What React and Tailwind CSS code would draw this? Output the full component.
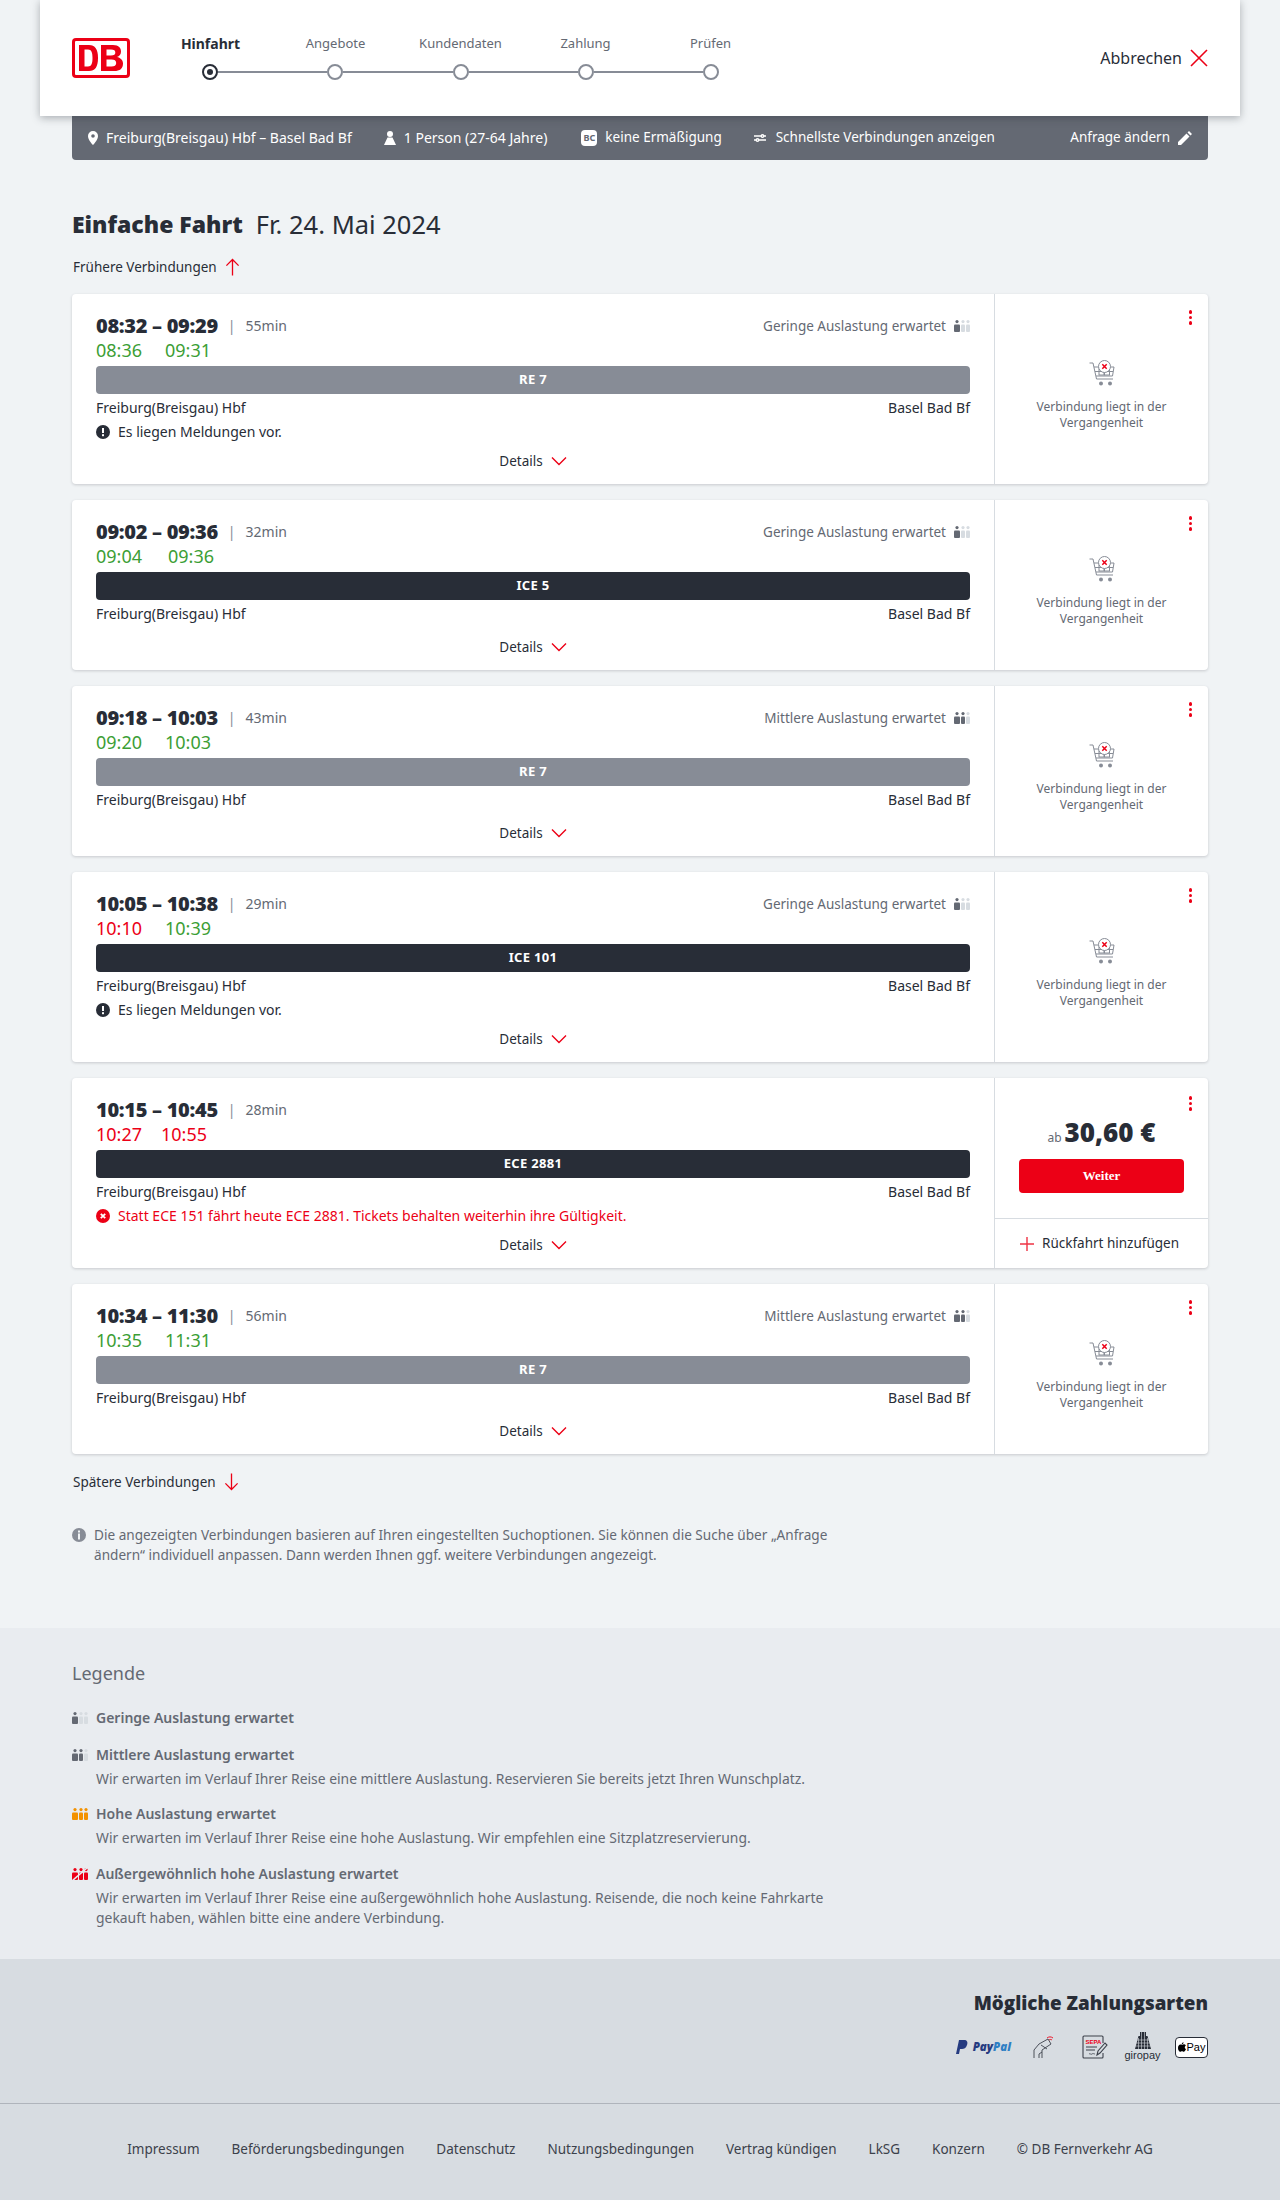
import React from 'react';

const Occupancy = ({ level, className = '' }) => {
  const color = (i) => {
    if (level === 3) return '#f39200';
    if (level === 4) return '#ec0016';
    return i < level ? '#646973' : '#d7dce1';
  };
  return (
    <svg viewBox="0 0 16 12" className={`w-4 h-3 shrink-0 ${className}`}>
      {[0, 1, 2].map((i) => {
        const x = i === 0 ? 0 : i === 1 ? 7 : 12;
        const w = i === 0 ? 6 : 4;
        return (
          <g key={i} fill={color(i)}>
            <circle cx={x + w / 2} cy="1.6" r="1.6" />
            <rect x={x} y="4.6" width={w} height="7.4" rx="1" />
          </g>
        );
      })}
      {level === 4 && <path d="M1 12 15 0" stroke="#e9ecf0" strokeWidth="1.6" />}
    </svg>
  );
};

const CartIcon = () => (
  <svg viewBox="0 0 26 26" className="w-[26px] h-[26px]" fill="none" stroke="#878c96" strokeWidth="1">
    <path d="M0.5 3 H4 L7.5 19 H24" />
    <path d="M5 7 H25 L23.5 16 H7" />
    <path d="M6 11.5 H24" />
    <rect x="10" y="9" width="5" height="6" />
    <rect x="15.5" y="10" width="5" height="5" />
    <circle cx="12" cy="23.5" r="2" fill="#878c96" stroke="none" />
    <circle cx="21" cy="23.5" r="2" fill="#878c96" stroke="none" />
    <circle cx="15.5" cy="6.5" r="6" fill="#fff" />
    <path d="M13.3 4.3 17.7 8.7 M17.7 4.3 13.3 8.7" stroke="#ec0016" strokeWidth="1.5" />
  </svg>
);

const Chevron = () => (
  <svg viewBox="0 0 16 10" className="w-4 h-2.5" fill="none" stroke="#ec0016" strokeWidth="1.4">
    <path d="M1 1.5 8 8.5 15 1.5" />
  </svg>
);

const Arrow = ({ down }) => (
  <svg viewBox="0 0 16 20" className={`w-[15px] h-5 ${down ? 'rotate-180' : ''}`} fill="none" stroke="#ec0016" strokeWidth="1.4">
    <path d="M8 19V2 M1.5 8.5 8 2l6.5 6.5" />
  </svg>
);

const Dots = ({ price }) => (
  <div className={`absolute right-4 flex flex-col gap-0.5 ${price ? 'top-[18px]' : 'top-4'}`}>
    <span className="w-[3.5px] h-[3.5px] rounded-full bg-[#ec0016]" />
    <span className="w-[3.5px] h-[3.5px] rounded-full bg-[#ec0016]" />
    <span className="w-[3.5px] h-[3.5px] rounded-full bg-[#ec0016]" />
  </div>
);

const trips = [
  { time: '08:32 – 09:29', dur: '55min', dep: '08:36', arr: '09:31', arrClass: 'w-[69px]', train: 'RE 7', level: 1, msg: 'info' },
  { time: '09:02 – 09:36', dur: '32min', dep: '09:04', arr: '09:36', arrClass: 'w-[72px]', train: 'ICE 5', level: 1 },
  { time: '09:18 – 10:03', dur: '43min', dep: '09:20', arr: '10:03', arrClass: 'w-[69px]', train: 'RE 7', level: 2 },
  { time: '10:05 – 10:38', dur: '29min', dep: '10:10', arr: '10:39', arrClass: 'w-[69px]', train: 'ICE 101', level: 1, msg: 'info', depLate: true },
  { time: '10:15 – 10:45', dur: '28min', dep: '10:27', arr: '10:55', arrClass: 'w-[65px]', train: 'ECE 2881', msg: 'error', depLate: true, arrLate: true, price: true },
  { time: '10:34 – 11:30', dur: '56min', dep: '10:35', arr: '11:31', arrClass: 'w-[69px]', train: 'RE 7', level: 2 },
];

const levelText = { 1: 'Geringe Auslastung erwartet', 2: 'Mittlere Auslastung erwartet' };

const TripCard = ({ trip }) => (
  <div className="flex bg-white rounded shadow-[0_1px_3px_rgba(40,45,55,0.2)]">
    <div className="w-[923px] px-6 pt-5 pb-[13px] border-r border-[#d7dce1]">
      <div className="flex items-center h-6">
        <span className="font-['Open_Sans',sans-serif] font-extrabold text-xl text-[#282d37] tracking-[-0.3px]">{trip.time}</span>
        <span className="mx-2.5 text-sm text-[#878c96]">|</span>
        <span className="text-sm text-[#646973]">{trip.dur}</span>
        {trip.level && (
          <div className="ml-auto flex items-center gap-2 text-[13.5px] text-[#646973]">
            {levelText[trip.level]}
            <Occupancy level={trip.level} />
          </div>
        )}
      </div>
      <div className="flex items-center h-[23px] text-lg">
        <span className={`${trip.arrClass} ${trip.depLate ? 'text-[#ec0016]' : 'text-[#3c9e35]'}`}>{trip.dep}</span>
        <span className={trip.arrLate ? 'text-[#ec0016]' : 'text-[#3c9e35]'}>{trip.arr}</span>
      </div>
      <div className={`mt-[5px] h-7 rounded flex items-center justify-center text-[13px] font-bold tracking-[0.3px] text-white ${trip.train === 'RE 7' ? 'bg-[#878c96]' : 'bg-[#282d37]'}`}>
        {trip.train}
      </div>
      <div className="mt-1 mb-1 flex justify-between h-5 items-center text-sm text-[#282d37]">
        <span>Freiburg(Breisgau) Hbf</span>
        <span>Basel Bad Bf</span>
      </div>
      {trip.msg === 'info' && (
        <div className="flex items-center h-5 gap-2 text-sm text-[#282d37]">
          <svg viewBox="0 0 14 14" className="w-3.5 h-3.5">
            <circle cx="7" cy="7" r="7" fill="#282d37" />
            <rect x="6" y="3" width="2" height="5" fill="#fff" />
            <rect x="6" y="9.2" width="2" height="2" fill="#fff" />
          </svg>
          Es liegen Meldungen vor.
        </div>
      )}
      {trip.msg === 'error' && (
        <div className="flex items-center h-5 gap-2 text-sm text-[#ec0016]">
          <svg viewBox="0 0 14 14" className="w-3.5 h-3.5">
            <circle cx="7" cy="7" r="7" fill="#ec0016" />
            <path d="M4.8 4.8 9.2 9.2 M9.2 4.8 4.8 9.2" stroke="#fff" strokeWidth="1.8" />
          </svg>
          Statt ECE 151 fährt heute ECE 2881. Tickets behalten weiterhin ihre Gültigkeit.
        </div>
      )}
      <div className={`h-5 flex items-center justify-center gap-2 text-[13.5px] text-[#282d37] ${trip.msg ? 'mt-[9px]' : 'mt-[13px]'}`}>
        Details
        <Chevron />
      </div>
    </div>
    <div className="relative w-[213px] flex flex-col">
      <Dots price={trip.price} />
      {trip.price ? (
        <>
          <div className="h-[141px] flex flex-col items-center pt-[38px] border-b border-[#d7dce1]">
            <div className="flex items-baseline gap-[3px] h-8">
              <span className="text-xs text-[#646973]">ab</span>
              <span className="font-['Open_Sans',sans-serif] font-extrabold text-[26px] leading-8 text-[#282d37]">30,60 €</span>
            </div>
            <button className="mt-[11px] w-[165px] h-[34px] rounded bg-[#ec0016] text-white text-[13px] font-bold font-['Liberation_Serif',serif]">Weiter</button>
          </div>
          <div className="flex-1 flex items-center pl-[25px] gap-2 text-[13.5px] text-[#282d37]">
            <svg viewBox="0 0 14 14" className="w-3.5 h-3.5" stroke="#ec0016" strokeWidth="1.4" opacity="0.8">
              <path d="M7 0V14 M0 7H14" />
            </svg>
            Rückfahrt hinzufügen
          </div>
        </>
      ) : (
        <div className="flex-1 flex flex-col items-center justify-center pt-3">
          <CartIcon />
          <p className="mt-[13px] w-[150px] text-center text-xs leading-4 text-[#646973]">Verbindung liegt in der Vergangenheit</p>
        </div>
      )}
    </div>
  </div>
);

const steps = ['Hinfahrt', 'Angebote', 'Kundendaten', 'Zahlung', 'Prüfen'];

const legend = [
  { level: 1, title: 'Geringe Auslastung erwartet' },
  { level: 2, title: 'Mittlere Auslastung erwartet', text: 'Wir erwarten im Verlauf Ihrer Reise eine mittlere Auslastung. Reservieren Sie bereits jetzt Ihren Wunschplatz.' },
  { level: 3, title: 'Hohe Auslastung erwartet', text: 'Wir erwarten im Verlauf Ihrer Reise eine hohe Auslastung. Wir empfehlen eine Sitzplatzreservierung.' },
  { level: 4, title: 'Außergewöhnlich hohe Auslastung erwartet', text: 'Wir erwarten im Verlauf Ihrer Reise eine außergewöhnlich hohe Auslastung. Reisende, die noch keine Fahrkarte gekauft haben, wählen bitte eine andere Verbindung.' },
];

const links = ['Impressum', 'Beförderungsbedingungen', 'Datenschutz', 'Nutzungsbedingungen', 'Vertrag kündigen', 'LkSG', 'Konzern', '© DB Fernverkehr AG'];

export default function App() {
  return (
    <div className="min-h-[2200px] bg-[#f0f3f5] font-['Noto_Sans',sans-serif] text-[#282d37] flex flex-col">
      {/* kopfzeile */}
      <header className="relative z-10 mx-10 h-[116px] bg-white shadow-[0_2px_8px_rgba(40,45,55,0.35)] flex items-center pl-8 pr-8">
        <svg viewBox="0 0 58 40" className="w-[58px] h-10 shrink-0">
          <rect width="58" height="40" rx="4" fill="#ec0016" />
          <rect x="3" y="3" width="52" height="34" rx="1" fill="#fff" />
          <path fillRule="evenodd" fill="#ec0016" d="M7 7h10c6 0 9 4 9 13s-3 13-9 13H7zM12.500 11.500v17h3.500c3.500 0 4.500-3 4.500-8.500s-1-8.500-4.500-8.500zM29 7h12c6 0 8 3 8 6.500 0 2.800-1.500 4.700-4 5.500 3.200.8 6 2.800 6 6.500C51 30.500 48 33 42 33H29zM34.500 11.500v6h4.500c3 0 4.300-.8 4.300-3s-1.300-3-4.300-3zM34.500 21.500v7h5c3 0 4.700-1 4.700-3.500s-1.700-3.500-4.700-3.500z" />
        </svg>
        <div className="ml-[18px] mb-0.5 w-[625px]">
          <div className="grid grid-cols-5 h-5 items-center text-center text-[13px] text-[#646973]">
            {steps.map((s, i) => (
              <span key={s} className={i === 0 ? 'font-bold text-sm text-[#282d37]' : ''}>{s}</span>
            ))}
          </div>
          <div className="mt-2.5 px-[54px] flex items-center">
            {steps.map((s, i) => (
              <React.Fragment key={s}>
                <span className={`w-4 h-4 rounded-full border-2 flex items-center justify-center shrink-0 bg-white ${i === 0 ? 'border-[#282d37]' : 'border-[#878c96]'}`}>
                  {i === 0 && <span className="w-1.5 h-1.5 rounded-full bg-[#282d37]" />}
                </span>
                {i < 4 && <span className="flex-1 h-0.5 bg-[#878c96]" />}
              </React.Fragment>
            ))}
          </div>
        </div>
        <div className="ml-auto flex items-center gap-2 text-base">
          Abbrechen
          <svg viewBox="0 0 18 18" className="w-[18px] h-[18px]" stroke="#ec0016" strokeWidth="1.6">
            <path d="M1 1 17 17 M17 1 1 17" />
          </svg>
        </div>
      </header>

      {/* anfrage */}
      <div className="mx-[72px] h-11 bg-[#646973] rounded-b flex items-center pl-4 pr-4 gap-8 text-sm text-white">
        <div className="flex items-center gap-2">
          <svg viewBox="0 0 10 14" className="w-2.5 h-3.5" fill="#fff">
            <path fillRule="evenodd" d="M5 0a5 5 0 0 1 5 5c0 3-3 7-5 9-2-2-5-6-5-9a5 5 0 0 1 5-5zm0 3.200a1.800 1.800 0 1 0 0 3.600 1.800 1.800 0 0 0 0-3.600z" />
          </svg>
          Freiburg(Breisgau) Hbf – Basel Bad Bf
        </div>
        <div className="flex items-center gap-2">
          <svg viewBox="0 0 12 14" className="w-3 h-3.5" fill="#fff">
            <circle cx="6" cy="3" r="3" />
            <path d="M3.500 6.500h5L12 14H0z" />
          </svg>
          1 Person (27-64 Jahre)
        </div>
        <div className="ml-0.5 flex items-center gap-2 text-[13.5px]">
          <span className="w-4 h-4 rounded-sm bg-white text-[#646973] text-[9px] font-bold leading-4 text-center">BC</span>
          keine Ermäßigung
        </div>
        <div className="flex items-center gap-2.5 text-[13.5px]">
          <svg viewBox="0 0 12 10" className="w-3 h-2.5" fill="none" stroke="#fff" strokeWidth="1.400">
            <path d="M0 3h7 M10 3h2 M0 7h2 M5 7h7" />
            <circle cx="8.500" cy="3" r="1.300" />
            <circle cx="3.500" cy="7" r="1.300" />
          </svg>
          Schnellste Verbindungen anzeigen
        </div>
        <div className="ml-auto flex items-center gap-2 text-[13.5px]">
          Anfrage ändern
          <svg viewBox="0 0 14 14" className="w-3.5 h-3.5" fill="#fff">
            <path d="M0 14V11L8.500 2.500l3 3L3 14zM9.500 1.500 11 0l3 3-1.500 1.500z" />
          </svg>
        </div>
      </div>

      <main className="mx-[72px]">
        <div className="mt-12 flex items-center h-8 gap-[13px]">
          <h1 className="font-['Open_Sans',sans-serif] font-extrabold text-[23px] text-[#282d37]">Einfache Fahrt</h1>
          <span className="text-[25.5px]">Fr. 24. Mai 2024</span>
        </div>
        <div className="mt-[17px] ml-px flex items-center h-5 gap-2 text-[13.5px]">
          Frühere Verbindungen
          <Arrow />
        </div>
        <div className="mt-[17px] flex flex-col gap-4">
          {trips.map((t) => (
            <TripCard key={t.time} trip={t} />
          ))}
        </div>
        <div className="mt-[18px] ml-px flex items-center h-5 gap-2 text-[13.5px]">
          Spätere Verbindungen
          <Arrow down />
        </div>
        <div className="mt-[33px] flex gap-2 max-w-[765px] text-[13.6px] leading-5 text-[#646973]">
          <svg viewBox="0 0 14 14" className="w-3.5 h-3.5 shrink-0 mt-[3px]">
            <circle cx="7" cy="7" r="7" fill="#878c96" />
            <rect x="6" y="2.500" width="2" height="2" fill="#f0f3f5" />
            <rect x="6" y="5.500" width="2" height="6" fill="#f0f3f5" />
          </svg>
          <p>Die angezeigten Verbindungen basieren auf Ihren eingestellten Suchoptionen. Sie können die Suche über „Anfrage ändern“ individuell anpassen. Dann werden Ihnen ggf. weitere Verbindungen angezeigt.</p>
        </div>
      </main>

      {/* legende */}
      <section className="mt-[63px] h-[331px] bg-[#e9ecf0] px-[72px] pt-[33px] text-[#646973]">
        <h2 className="text-lg leading-6">Legende</h2>
        <div className="mt-[22px] flex flex-col gap-[14.5px]">
          {legend.map((l) => (
            <div key={l.level}>
              <div className="flex items-center gap-2 h-[22px] text-sm font-semibold">
                <Occupancy level={l.level} />
                {l.title}
              </div>
              {l.text && <p className="mt-[3px] ml-6 max-w-[735px] text-[13.9px] leading-5">{l.text}</p>}
            </div>
          ))}
        </div>
      </section>

      {/* zahlungsarten */}
      <section className="h-[144px] bg-[#d7dce1] px-[72px] pt-[30px] flex flex-col items-end">
        <h2 className="font-['Open_Sans',sans-serif] font-extrabold text-[18.8px] leading-7 text-[#282d37]">Mögliche Zahlungsarten</h2>
        <div className="mt-[13px] flex items-center h-[34px]">
          <div className="flex items-center gap-[5px] font-['Open_Sans',sans-serif] italic font-extrabold text-[11.5px]">
            <svg viewBox="0 0 12 14" className="w-3 h-3.5"><path d="M3 0h5c3 0 4 2 3 5s-3 4-5 4H4l-1 5H0z" fill="#253b80" /></svg>
            <span><span className="text-[#253b80]">Pay</span><span className="text-[#2f7fc4]">Pal</span></span>
          </div>
          <svg viewBox="0 0 22 24" className="ml-[22px] w-[22px] h-6" fill="none" stroke="#3c414b" strokeWidth="0.900">
            <path d="M1 23V15l5-6 9-5 3 5-9 6v2l-3 2v4" />
            <path d="M9 23v-6 M8 10l6 4" />
            <path d="M14 3c2-1.500 4-1.500 6 0 M16 5c1-.7 2-.7 3 0" stroke="#ec0016" />
          </svg>
          <svg viewBox="0 0 26 24" className="ml-[27px] w-[26px] h-6" fill="none" stroke="#3c414b" strokeWidth="1.100">
            <path d="M21 8V2a1 1 0 0 0-1-1H2a1 1 0 0 0-1 1v20a1 1 0 0 0 1 1h18a1 1 0 0 0 1-1v-4" />
            <text x="3.500" y="8.500" fontSize="6" fontWeight="700" fill="#ec0016" stroke="none" fontFamily="Liberation Sans, sans-serif">SEPA</text>
            <path d="M4 12h11 M4 15h9" />
            <path d="M7 19c1-1 2 1 3 0s2 0 3 0" strokeWidth="0.800" />
            <path d="M15 20l1-4 7-8 2 2-7 8z" />
          </svg>
          <div className="ml-[17px] flex flex-col items-center w-[35px]">
            <svg viewBox="0 0 16 17" className="w-4 h-[17px]">
              <path d="M5 0h6v4h1.500L16 17H0L3.500 4H5z" fill="#282d37" />
              <path d="M6.500 0v17 M9.500 0v17 M3.500 6v11 M12.500 6v11 M0 8h16 M0 11h16 M0 14h16" stroke="#d7dce1" strokeWidth="0.600" />
            </svg>
            <span className="text-[11px] leading-[13px] text-[#282d37] font-['Liberation_Sans',sans-serif]">giropay</span>
          </div>
          <div className="ml-[15px] w-[33px] h-[21px] border border-[#282d37] rounded-sm bg-white flex items-center justify-center gap-px text-[11px] font-medium font-['Liberation_Sans',sans-serif] text-black">
            <svg viewBox="0 0 10 12" className="w-2 h-2.5" fill="#000">
              <path d="M7 0c0 1.500-1 2.500-2.300 2.500C4.700 1 6 0 7 0zM5 3.200C6 3.200 6.500 2.700 7.500 2.700c1 0 1.800.5 2.300 1.300-2 1.200-1.600 3.800.2 4.500-.6 1.500-1.600 3.500-2.800 3.500-.9 0-1.200-.6-2.200-.6s-1.300.6-2.200.6C1.300 12 0 9.500 0 7.200c0-2.500 1.500-4.200 3-4.200.8 0 1.400.2 2 .2z" />
            </svg>
            Pay
          </div>
        </div>
      </section>

      {/* pied de page */}
      <footer className="h-[97px] pb-1.5 bg-[#d7dce1] border-t border-[#afb4bb] flex items-center justify-center gap-8 text-[13.5px] text-[#3c414b]">
        {links.map((l) => (
          <span key={l}>{l}</span>
        ))}
      </footer>
    </div>
  );
}
